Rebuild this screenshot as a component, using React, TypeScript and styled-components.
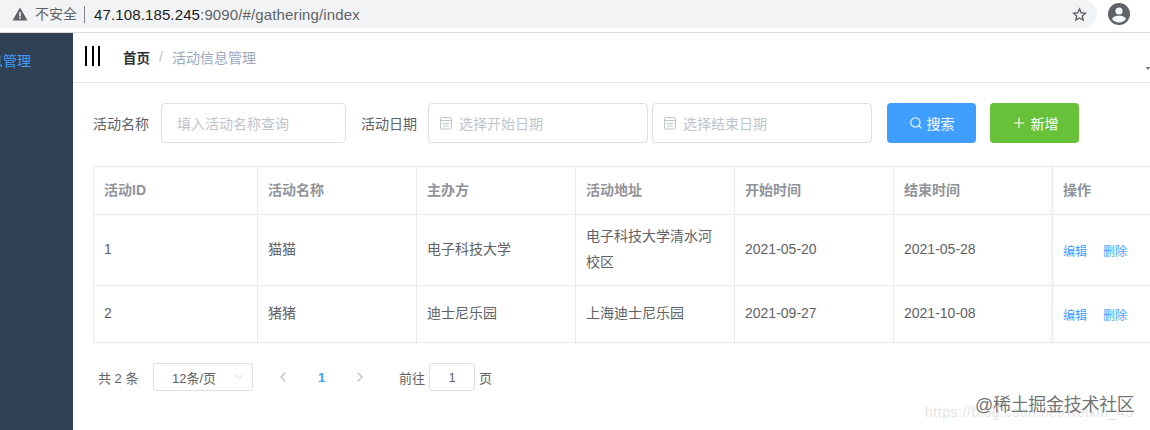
import React from 'react'
import styled, { createGlobalStyle } from 'styled-components'
import { ChevronDown, ChevronLeft, ChevronRight, Plus, Search } from 'lucide-react'

const GlobalStyle = createGlobalStyle`
  html, body {
    margin: 0;
    padding: 0;
    background: #fff;
    overflow: hidden;
  }
  * { box-sizing: border-box; }
  body {
    font-family: "Liberation Sans", "Noto Sans CJK SC", sans-serif;
  }
`

const Page = styled.div`
  width: 1150px;
  height: 430px;
  position: relative;
  overflow: hidden;
  display: flex;
  flex-direction: column;
`

const BrowserBar = styled.div`
  height: 33px;
  flex: none;
  display: flex;
  align-items: flex-start;
  border-bottom: 1px solid #dcdcdc;
  background: #fff;
`

const AddressPill = styled.div`
  width: 1097px;
  height: 28px;
  background: #f1f3f4;
  border-radius: 0 14px 14px 0;
  display: flex;
  align-items: center;
  padding: 0 10px 0 12px;
  font-size: 14px;
  color: #5f6368;
`

const Insecure = styled.span`
  margin-left: 7px;
  font-size: 14px;
  padding-right: 7px;
  border-right: 1px solid #80868b;
  line-height: 17px;
`

const Url = styled.span`
  margin-left: 9px;
  font-size: 15px;
  letter-spacing: 0.13px;
  color: #5f6368;
  flex: 1;
  b {
    font-weight: normal;
    color: #202124;
  }
`

const AccountSlot = styled.div`
  margin: 3px 0 0 11px;
  display: flex;
`

const Body = styled.div`
  flex: 1;
  display: flex;
  min-height: 0;
`

const Sidebar = styled.aside`
  width: 73px;
  flex: none;
  background: #304156;
  overflow: hidden;
  display: flex;
  justify-content: flex-end;
  padding: 20px 42px 0 0;
  color: #409eff;
  font-size: 14px;
  line-height: 17px;
  white-space: nowrap;
`

const Main = styled.main`
  flex: 1;
  min-width: 0;
  overflow: hidden;
`

const TopNav = styled.div`
  height: 50px;
  position: relative;
  display: flex;
  align-items: center;
  padding-left: 12px;
  border-bottom: 1px solid #e4e4e4;
`

const Hamburger = styled.div`
  width: 15px;
  height: 20px;
  margin-top: -3px;
  display: flex;
  justify-content: space-between;
  span {
    width: 2px;
    background: #000;
  }
`

const Crumbs = styled.div`
  margin: -2px 0 0 23px;
  display: flex;
  align-items: center;
  font-size: 14px;
  strong { color: #303133; font-size: 13.5px; }
`

const CrumbSep = styled.span`
  color: #c0c4cc;
  margin: 0 9px;
`

const CrumbCurrent = styled.span`
  color: #97a8be;
`

const Caret = styled.span`
  position: absolute;
  right: 0;
  top: 34px;
  width: 0;
  height: 0;
  border-left: 2px solid transparent;
  border-right: 2px solid transparent;
  border-top: 3px solid #606266;
`

const Content = styled.div`
  padding: 20px 0 0 20px;
  width: 1120px;
`

const FilterRow = styled.div`
  display: flex;
  align-items: center;
  height: 40px;
`

const FilterLabel = styled.label<{ $gap: number; $ml?: number }>`
  font-size: 14px;
  width: 56px;
  white-space: nowrap;
  color: #606266;
  margin-left: ${p => p.$ml ?? 0}px;
  margin-right: ${p => p.$gap}px;
`

const Field = styled.div<{ $w: number; $pad: number; $ml?: number }>`
  width: ${p => p.$w}px;
  height: 40px;
  flex: none;
  display: flex;
  align-items: center;
  gap: 6px;
  margin-left: ${p => p.$ml ?? 0}px;
  padding-left: ${p => p.$pad}px;
  border: 1px solid #dcdfe6;
  border-radius: 4px;
  font-size: 14px;
  color: #c0c4cc;
  background: #fff;
`

const ActionButton = styled.button<{ $bg: string; $ml: number }>`
  width: 89px;
  height: 40px;
  flex: none;
  margin-left: ${p => p.$ml}px;
  border: none;
  border-radius: 4px;
  background: ${p => p.$bg};
  color: #fff;
  font-family: inherit;
  font-size: 14px;
  display: flex;
  align-items: center;
  justify-content: center;
  gap: 4px;
`

const TableWrap = styled.div`
  margin-top: 23px;
  border-top: 1px solid #e9ebef;
  border-left: 1px solid #e9ebef;
  position: relative;
  width: 1081px;
`

const Table = styled.table`
  border-collapse: separate;
  border-spacing: 0;
  table-layout: fixed;
  width: 1080px;
  font-size: 14px;
  color: #606266;
`

const Th = styled.th<{ $w: number }>`
  width: ${p => p.$w}px;
  height: 48px;
  padding: 0 10px 3px;
  text-align: left;
  font-size: 14px;
  font-weight: bold;
  color: #909399;
  border-right: 1px solid #e9ebef;
  border-bottom: 1px solid #e9ebef;
`

const Td = styled.td<{ $h: number }>`
  height: ${p => p.$h}px;
  padding: 0 10px 2px;
  line-height: 26px;
  border-right: 1px solid #e9ebef;
  border-bottom: 1px solid #e9ebef;
`

const FixedShadow = styled.div`
  position: absolute;
  left: 958px;
  top: 0;
  bottom: 0;
  width: 1px;
  box-shadow: -1px 0 4px rgba(0, 0, 0, 0.16);
`

const Link = styled.a`
  font-size: 12px;
  color: #409eff;
  margin-right: 16px;
  position: relative;
  top: 2px;
`

const Pagination = styled.div`
  margin-top: 20px;
  margin-left: 5px;
  height: 28px;
  display: flex;
  align-items: center;
  font-size: 13px;
  color: #606266;
`

const Total = styled.span`
  width: 55px;
`

const SizeSelect = styled.div`
  width: 100px;
  height: 28px;
  border: 1px solid #dcdfe6;
  border-radius: 3px;
  display: flex;
  align-items: center;
  justify-content: space-between;
  padding: 0 6px 0 18px;
`

const Pager = styled.div`
  margin-left: 22px;
  width: 93px;
  display: flex;
  align-items: center;
  justify-content: space-between;
  color: #c0c4cc;
`

const PageNo = styled.span`
  color: #409eff;
  font-weight: bold;
  font-size: 13px;
`

const Jump = styled.div`
  margin-left: 31px;
  display: flex;
  align-items: center;
  gap: 4px;
`

const JumpInput = styled.div`
  width: 46px;
  height: 28px;
  border: 1px solid #dcdfe6;
  border-radius: 3px;
  display: flex;
  align-items: center;
  justify-content: center;
`

const MarkJuejin = styled.div`
  position: absolute;
  left: 975px;
  top: 394px;
  font-size: 18px;
  line-height: 22px;
  letter-spacing: -0.3px;
  color: rgba(90, 90, 90, 0.85);
  white-space: nowrap;
`

const MarkUrl = styled.div`
  position: absolute;
  left: 925px;
  top: 404px;
  font-size: 14px;
  line-height: 17px;
  letter-spacing: 0.55px;
  color: rgba(170, 170, 170, 0.35);
  white-space: nowrap;
`

const columns = [
  { name: '活动ID', w: 164 },
  { name: '活动名称', w: 159 },
  { name: '主办方', w: 159 },
  { name: '活动地址', w: 159 },
  { name: '开始时间', w: 159 },
  { name: '结束时间', w: 159 },
  { name: '操作', w: 121 },
]

const rows = [
  { h: 71, cells: ['1', '猫猫', '电子科技大学', '电子科技大学清水河校区', '2021-05-20', '2021-05-28'] },
  { h: 57, cells: ['2', '猪猪', '迪士尼乐园', '上海迪士尼乐园', '2021-09-27', '2021-10-08'] },
]

// element-ui date icon: box with a header rule and two text lines
const DateIcon = () => (
  <svg width="14" height="14" viewBox="0 0 14 14" fill="none" stroke="#c0c4cc" strokeWidth="1">
    <rect x="1.5" y="1.5" width="11" height="11.5" rx="1" />
    <path d="M1.5 4.5 H12.5 M4 7.5 H10 M4 10 H10" />
  </svg>
)

const App = () => (
  <Page>
    <GlobalStyle />
    <BrowserBar>
      <AddressPill>
        <svg width="16" height="14" viewBox="0 0 16 14">
          <path d="M8 0.5 L15.5 13.5 H0.5 Z" fill="#5f6368" />
          <rect x="7.2" y="5" width="1.6" height="4.5" fill="#f1f3f4" />
          <rect x="7.2" y="10.3" width="1.6" height="1.6" fill="#f1f3f4" />
        </svg>
        <Insecure>不安全</Insecure>
        <Url><b>47.108.185.245</b>:9090/#/gathering/index</Url>
        <svg width="15" height="15" viewBox="0 0 24 24" fill="none" stroke="#5f6368" strokeWidth="2.2">
          <path d="M12 3 L14.8 9.2 L21.5 9.9 L16.5 14.4 L17.9 21 L12 17.6 L6.1 21 L7.5 14.4 L2.5 9.9 L9.2 9.2 Z" />
        </svg>
      </AddressPill>
      <AccountSlot>
        <svg width="22" height="22" viewBox="0 0 22 22">
          <circle cx="11" cy="11" r="11" fill="#5f6368" />
          <circle cx="11" cy="8" r="3.6" fill="#f8f9fa" />
          <path d="M4 16 C5.5 13.2 8.5 12.8 11 12.8 C13.5 12.8 16.5 13.2 18 16 C16.4 18.2 13.8 19.4 11 19.4 C8.2 19.4 5.6 18.2 4 16 Z" fill="#f8f9fa" />
        </svg>
      </AccountSlot>
    </BrowserBar>
    <Body>
      <Sidebar>信息管理</Sidebar>
      <Main>
        <TopNav>
          <Hamburger><span /><span /><span /></Hamburger>
          <Crumbs>
            <strong>首页</strong>
            <CrumbSep>/</CrumbSep>
            <CrumbCurrent>活动信息管理</CrumbCurrent>
          </Crumbs>
          <Caret />
        </TopNav>
        <Content>
          <FilterRow>
            <FilterLabel $gap={12}>活动名称</FilterLabel>
            <Field $w={185} $pad={15}>填入活动名称查询</Field>
            <FilterLabel $gap={11} $ml={15}>活动日期</FilterLabel>
            <Field $w={220} $pad={10}>
              <DateIcon />选择开始日期
            </Field>
            <Field $w={220} $pad={10} $ml={4}>
              <DateIcon />选择结束日期
            </Field>
            <ActionButton $bg="#409eff" $ml={15}>
              <Search size={14} strokeWidth={1.8} />搜索
            </ActionButton>
            <ActionButton $bg="#67c23a" $ml={14}>
              <Plus size={16} strokeWidth={1.6} />新增
            </ActionButton>
          </FilterRow>
          <TableWrap>
            <Table>
              <thead>
                <tr>
                  {columns.map(c => <Th key={c.name} $w={c.w}>{c.name}</Th>)}
                </tr>
              </thead>
              <tbody>
                {rows.map(r => (
                  <tr key={r.cells[0]}>
                    {r.cells.map(c => <Td key={c} $h={r.h}>{c}</Td>)}
                    <Td $h={r.h}>
                      <Link>编辑</Link>
                      <Link>删除</Link>
                    </Td>
                  </tr>
                ))}
              </tbody>
            </Table>
            <FixedShadow />
          </TableWrap>
          <Pagination>
            <Total>共 2 条</Total>
            <SizeSelect>
              12条/页
              <ChevronDown size={14} color="#c0c4cc" strokeWidth={1.2} />
            </SizeSelect>
            <Pager>
              <ChevronLeft size={16} strokeWidth={2.2} />
              <PageNo>1</PageNo>
              <ChevronRight size={16} strokeWidth={2.2} />
            </Pager>
            <Jump>
              前往
              <JumpInput>1</JumpInput>
              页
            </Jump>
          </Pagination>
        </Content>
      </Main>
    </Body>
    <MarkUrl>https://blog.csdn.net/weixin_45</MarkUrl>
    <MarkJuejin>@稀土掘金技术社区</MarkJuejin>
  </Page>
)

export default App
